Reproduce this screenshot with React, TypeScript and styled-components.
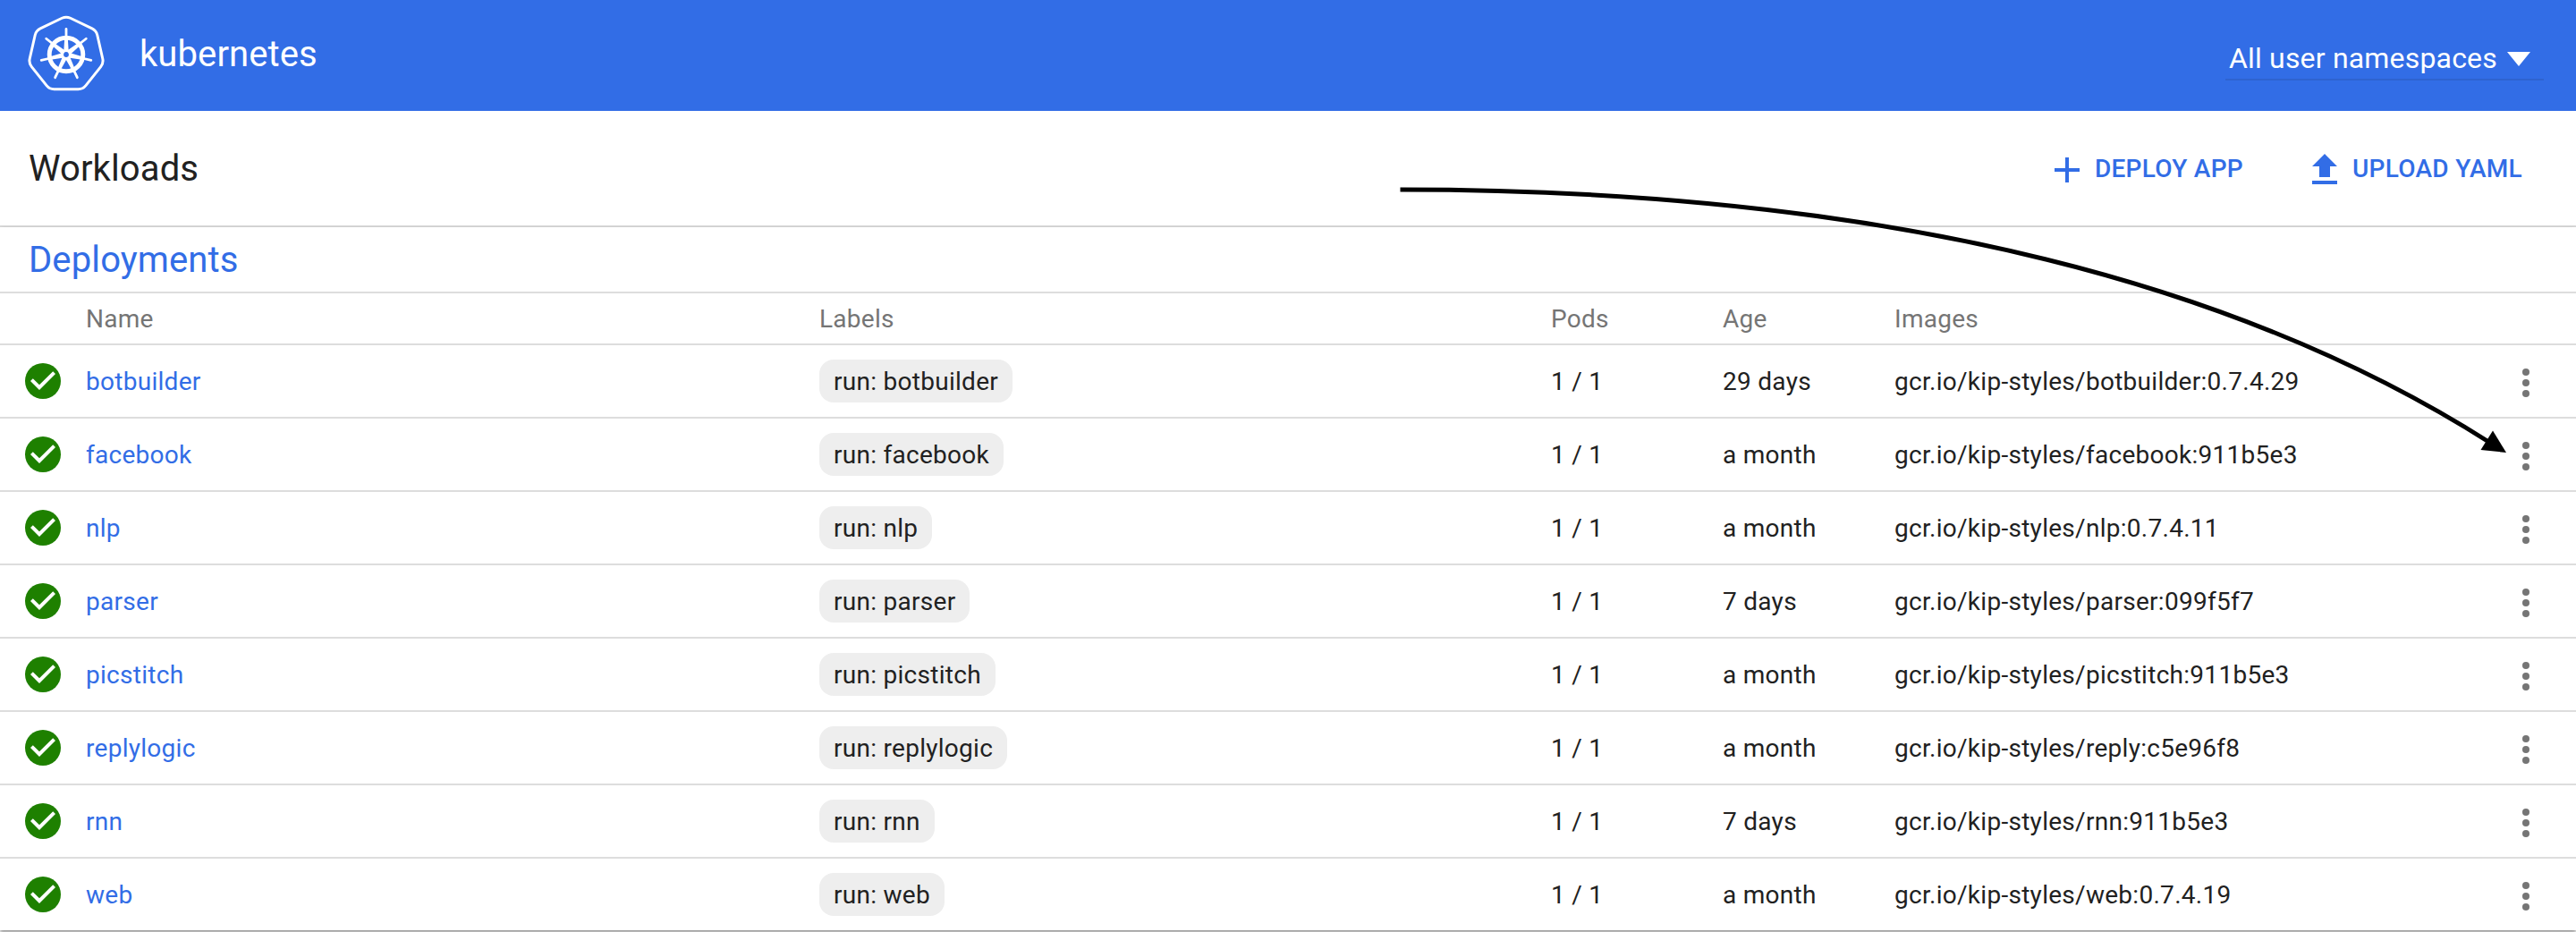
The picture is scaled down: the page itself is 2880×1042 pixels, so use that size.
import React from 'react';
import styled, { createGlobalStyle } from 'styled-components';

const GlobalStyle = createGlobalStyle`
  *, *::before, *::after { box-sizing: border-box; }
  html, body { margin: 0; padding: 0; overflow: hidden; background: #fff; }
  body { font-family: Roboto, "Liberation Sans", sans-serif; }
`;

const Page = styled.div`
  position: relative;
  display: flex;
  flex-direction: column;
  width: 2880px;
  height: 1042px;
  overflow: hidden;
  background: #fff;
  color: #212121;
  font-size: 28px;
  letter-spacing: 0.28px;
`;

const Header = styled.header`
  display: flex;
  align-items: center;
  justify-content: space-between;
  height: 124px;
  flex: none;
  padding: 0 36px 0 30px;
  background: #326de6;
  color: #fff;
`;

const Brand = styled.div`
  display: flex;
  align-items: center;
  gap: 38px;
  margin-top: -2px;
`;

const BrandName = styled.span`
  font-size: 40px;
  line-height: 48px;
  letter-spacing: 0.1px;
`;

const Namespace = styled.div`
  display: flex;
  align-items: center;
  gap: 11px;
  width: 356px;
  height: 50px;
  margin-top: 6px;
  padding: 2px 0 0 4px;
  border-bottom: 2px solid #2e63d0;
  font-size: 32px;
  line-height: 46px;
  letter-spacing: 0.18px;
`;

const Caret = styled.span`
  margin-top: 2px;
  border: 13px solid transparent;
  border-top: 16px solid #fff;
  border-bottom: 0;
`;

const Toolbar = styled.div`
  display: flex;
  align-items: center;
  justify-content: space-between;
  height: 130px;
  flex: none;
  padding: 2px 60px 0 32px;
  border-bottom: 2px solid #ddd;
`;

const PageTitle = styled.h1`
  margin: 0;
  font-size: 40px;
  font-weight: 400;
  line-height: 48px;
  letter-spacing: 0.12px;
`;

const Actions = styled.div`
  display: flex;
  gap: 67px;
  margin-top: 2px;
`;

const ActionButton = styled.button`
  display: flex;
  align-items: center;
  gap: 7px;
  padding: 0;
  border: 0;
  background: none;
  color: #326de6;
  font: 500 28px/48px Roboto, "Liberation Sans", sans-serif;
  letter-spacing: 0.28px;
  text-transform: uppercase;
`;

const ActionLabel = styled.span`
  padding-bottom: 2px;
`;

const ActionIcon = styled.svg`
  width: 48px;
  height: 48px;
  fill: currentColor;
`;

const Card = styled.section`
  display: flex;
  flex-direction: column;
  flex: none;
  box-shadow: 0 2px 4px rgba(0, 0, 0, 0.48);
`;

const CardTitle = styled.h2`
  height: 74px;
  margin: 0;
  padding: 0 32px;
  border-bottom: 2px solid #ddd;
  color: #326de6;
  font-size: 40px;
  font-weight: 400;
  line-height: 74px;
  letter-spacing: 0.12px;
`;

const Row = styled.div<{ $head?: boolean }>`
  display: grid;
  grid-template-columns: 96px 820px 818px 192px 192px 1fr 112px;
  align-items: center;
  height: ${(p) => (p.$head ? 58 : 82)}px;
  border-bottom: 2px solid #ddd;
  color: ${(p) => (p.$head ? '#757575' : '#212121')};
  line-height: 48px;

  &:last-child { height: 80px; border-bottom: 0; }
`;

const Cell = styled.span`
  padding-top: 2px;
  white-space: nowrap;
`;

const NameLink = styled.a`
  padding-top: 2px;
  color: #326de6;
`;

const Chip = styled.span`
  justify-self: start;
  height: 48px;
  padding: 0 16px;
  border-radius: 16px;
  background: #eee;
  line-height: 50px;
`;

const StatusIcon = styled.svg`
  width: 48px;
  height: 48px;
  margin-left: 24px;
`;

const MenuIcon = styled.svg`
  width: 48px;
  height: 48px;
  margin-left: 32px;
  margin-top: 4px;
  fill: #757575;
`;

const Annotation = styled.svg`
  position: absolute;
  inset: 0;
  width: 2880px;
  height: 1042px;
  pointer-events: none;
`;

const point = (radius: number, turn: number) => {
  const a = (turn / 7) * 2 * Math.PI - Math.PI / 2;
  return [44 + radius * Math.cos(a), 44 + radius * Math.sin(a)];
};

/* Seven rounded corners: each vertex is cut and bridged by a quadratic curve. */
const heptagon = () => {
  const v = Array.from({ length: 7 }, (_, i) => point(43, i));
  const mix = (a: number[], b: number[], t: number) => `${a[0] + (b[0] - a[0]) * t} ${a[1] + (b[1] - a[1]) * t}`;
  return v
    .map((p, i) => {
      const prev = v[(i + 6) % 7];
      const next = v[(i + 1) % 7];
      return `${i ? 'L' : 'M'}${mix(p, prev, 0.14)}Q${p[0]} ${p[1]} ${mix(p, next, 0.14)}`;
    })
    .join('') + 'Z';
};

const Logo = () => (
  <svg width="88" height="88" viewBox="0 0 88 88" fill="none" stroke="#fff">
    <path d={heptagon()} strokeWidth="3" />
    <circle cx="44" cy="44" r="18.8" strokeWidth="4.9" />
    {[0, 1, 2, 3, 4, 5, 6].map((i) => (
      <g key={i} transform={`rotate(${(i * 360) / 7} 44 44)`}>
        <path d="M44 26V15.5" strokeWidth="2.8" strokeLinecap="round" />
        <path d="M42.2 26H45.8L46.6 39L44 41L41.4 39Z" fill="#fff" stroke="none" />
      </g>
    ))}
    <circle cx="44" cy="44" r="4.4" strokeWidth="3" />
  </svg>
);

const workloads = [
  ['botbuilder', '29 days', 'botbuilder:0.7.4.29'],
  ['facebook', 'a month', 'facebook:911b5e3'],
  ['nlp', 'a month', 'nlp:0.7.4.11'],
  ['parser', '7 days', 'parser:099f5f7'],
  ['picstitch', 'a month', 'picstitch:911b5e3'],
  ['replylogic', 'a month', 'reply:c5e96f8'],
  ['rnn', '7 days', 'rnn:911b5e3'],
  ['web', 'a month', 'web:0.7.4.19'],
];

export default function App() {
  return (
    <Page>
      <GlobalStyle />
      <Header>
        <Brand>
          <Logo />
          <BrandName>kubernetes</BrandName>
        </Brand>
        <Namespace>
          All user namespaces
          <Caret />
        </Namespace>
      </Header>
      <Toolbar>
        <PageTitle>Workloads</PageTitle>
        <Actions>
          <ActionButton>
            <ActionIcon viewBox="0 0 24 24">
              <path d="M19 13h-6v6h-2v-6H5v-2h6V5h2v6h6z" />
            </ActionIcon>
            <ActionLabel>Deploy app</ActionLabel>
          </ActionButton>
          <ActionButton>
            <ActionIcon viewBox="0 0 24 24">
              <path d="M9 16h6v-6h4l-7-7-7 7h4zm-4 2h14v2H5z" />
            </ActionIcon>
            <ActionLabel>Upload YAML</ActionLabel>
          </ActionButton>
        </Actions>
      </Toolbar>
      <Card>
        <CardTitle>Deployments</CardTitle>
        <Row $head>
          <span />
          <Cell>Name</Cell>
          <Cell>Labels</Cell>
          <Cell>Pods</Cell>
          <Cell>Age</Cell>
          <Cell>Images</Cell>
        </Row>
        {workloads.map(([name, age, image]) => (
          <Row key={name}>
            <StatusIcon viewBox="0 0 24 24">
              <circle cx="12" cy="12" r="10" fill="#1e8000" />
              <path d="M10 17l-5-5 1.41-1.41L10 14.17l7.59-7.59L19 8z" fill="#fff" />
            </StatusIcon>
            <NameLink>{name}</NameLink>
            <Chip>run: {name}</Chip>
            <Cell>1 / 1</Cell>
            <Cell>{age}</Cell>
            <Cell>gcr.io/kip-styles/{image}</Cell>
            <MenuIcon viewBox="0 0 24 24">
              <circle cx="12" cy="6" r="2" />
              <circle cx="12" cy="12" r="2" />
              <circle cx="12" cy="18" r="2" />
            </MenuIcon>
          </Row>
        ))}
      </Card>
      <Annotation viewBox="0 0 2880 1042">
        <path d="M1565.5 212Q2340 212 2784 495" fill="none" stroke="#000" strokeWidth="5" />
        <path d="M2802 506L2787 481.5L2773.5 503Z" fill="#000" />
      </Annotation>
    </Page>
  );
}
